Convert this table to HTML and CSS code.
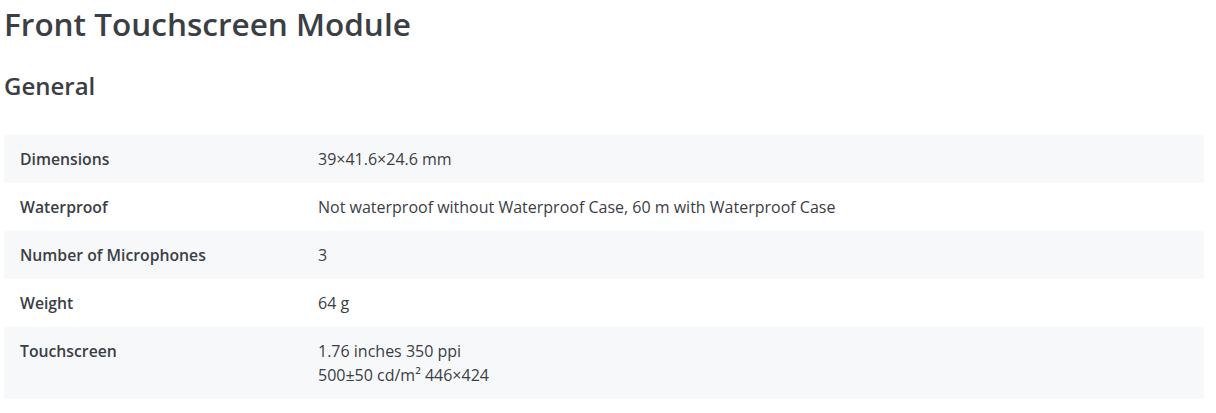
FILE: index.html
```html
<!DOCTYPE html>
<html lang="en">
<head>
<meta charset="utf-8">
<title>Front Touchscreen Module</title>
<link rel="stylesheet" href="styles.css">
</head>
<body>
<main class="page">
  <h1 class="title">Front Touchscreen Module</h1>
  <h2 class="subtitle">General</h2>
  <div class="specs">
    <div class="row alt">
      <div class="label">Dimensions</div>
      <div class="value">39×41.6×24.6 mm</div>
    </div>
    <div class="row">
      <div class="label">Waterproof</div>
      <div class="value">Not waterproof without Waterproof Case, 60 m with Waterproof Case</div>
    </div>
    <div class="row alt">
      <div class="label">Number of Microphones</div>
      <div class="value">3</div>
    </div>
    <div class="row">
      <div class="label">Weight</div>
      <div class="value">64 g</div>
    </div>
    <div class="row alt">
      <div class="label">Touchscreen</div>
      <div class="value">1.76 inches 350 ppi<br>500±50 cd/m² 446×424</div>
    </div>
  </div>
</main>
</body>
</html>
```
FILE: styles.css
```css
html, body {
  margin: 0;
  padding: 0;
  background: #ffffff;
}
body {
  font-family: "Open Sans", "Liberation Sans", sans-serif;
  color: #3b3e44;
}
.page {
  width: 1200px;
  padding: 4px 4px 0 4px;
}
.title {
  margin: 0;
  font-size: 31.5px;
  line-height: 40px;
  font-weight: 600;
  color: #3b3e44;
}
.subtitle {
  margin: 26px 0 0 0;
  font-size: 24px;
  line-height: 32px;
  font-weight: 600;
  color: #3b3e44;
}
.specs {
  margin-top: 33px;
  display: flex;
  flex-direction: column;
}
.row {
  display: grid;
  grid-template-columns: 298px 1fr;
  background: #ffffff;
}
.row.alt {
  background: #f7f8fa;
}
.label,
.value {
  padding: 12px 16px;
  line-height: 24px;
}
.label {
  font-size: 15.75px;
  font-weight: 600;
  color: #3b3e44;
}
.value {
  font-size: 16px;
  font-weight: 400;
  color: #3b3e44;
}
```
